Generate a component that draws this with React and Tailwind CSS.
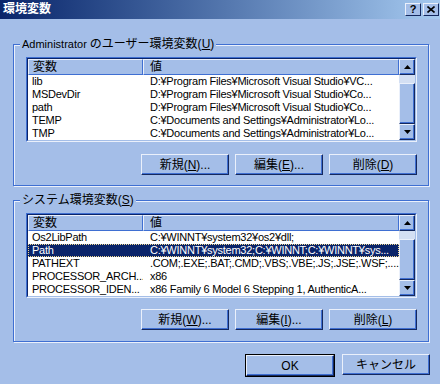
import React from 'react';

const FACE = 'bg-[#a4bee8]';

const userVars = [
  ['lib', 'D:¥Program Files¥Microsoft Visual Studio¥VC...'],
  ['MSDevDir', 'D:¥Program Files¥Microsoft Visual Studio¥Co...'],
  ['path', 'D:¥Program Files¥Microsoft Visual Studio¥Co...'],
  ['TEMP', 'C:¥Documents and Settings¥Administrator¥Lo...'],
  ['TMP', 'C:¥Documents and Settings¥Administrator¥Lo...'],
];

const sysVars = [
  ['Os2LibPath', 'C:¥WINNT¥system32¥os2¥dll;'],
  ['Path', 'C:¥WINNT¥system32;C:¥WINNT;C:¥WINNT¥sys...'],
  ['PATHEXT', '.COM;.EXE;.BAT;.CMD;.VBS;.VBE;.JS;.JSE;.WSF;....'],
  ['PROCESSOR_ARCH...', 'x86'],
  ['PROCESSOR_IDEN...', 'x86 Family 6 Model 6 Stepping 1, AuthenticA...'],
];

const Btn = ({ children, className = '' }) => (
  <div
    className={`h-[21px] w-[88px] ${FACE} flex items-center justify-center text-[12px] text-black border border-t-[#eaf0fb] border-l-[#eaf0fb] border-r-[#14285e] border-b-[#14285e] shadow-[inset_-1px_-1px_0_#3f6fd2] ${className}`}
  >
    {children}
  </div>
);

const Arrow = ({ down }) => (
  <div className={`h-[16px] w-[16px] ${FACE} flex items-center justify-center border border-t-[#eaf0fb] border-l-[#eaf0fb] border-r-[#14285e] border-b-[#14285e] shadow-[inset_-1px_-1px_0_#3f6fd2]`}>
    <svg width="7" height="4" viewBox="0 0 7 4">
      {down ? <path d="M0 0h7L3.5 4z" fill="#000" /> : <path d="M0 4h7L3.5 0z" fill="#000" />}
    </svg>
  </div>
);

const ListBox = ({ rows, selected }) => (
  <div className="h-[85px] flex border border-t-[#3f6fd2] border-l-[#3f6fd2] border-r-[#eaf0fb] border-b-[#eaf0fb]">
    <div className="flex flex-1 min-w-0 bg-white border border-t-[#0a246a] border-l-[#0a246a] border-r-[#a4bee8] border-b-[#a4bee8]">
      <div className="flex flex-1 min-w-0 flex-col">
        <div className="flex h-[16px] text-[12px] leading-[14px] text-black">
          <div className={`w-[115px] ${FACE} pl-[4px] border border-t-[#eaf0fb] border-l-[#eaf0fb] border-r-[#3f6fd2] border-b-[#3f6fd2]`}>変数</div>
          <div className={`flex-1 ${FACE} pl-[6px] border border-t-[#eaf0fb] border-l-[#eaf0fb] border-r-[#3f6fd2] border-b-[#3f6fd2]`}>値</div>
        </div>
        {rows.map(([name, value], i) => (
          <div
            key={name}
            className={`flex h-[13px] text-[11px] leading-[13px] tracking-[-0.25px] whitespace-nowrap ${
              i === selected ? 'bg-[#0a246a] text-white outline outline-1 outline-dotted outline-[#f0d890] -outline-offset-1' : 'text-black'
            }`}
          >
            <div className="w-[115px] pl-[4px] overflow-hidden">{name}</div>
            <div className="flex-1 min-w-0 pl-[7px] overflow-hidden">{value}</div>
          </div>
        ))}
      </div>
      <div className="w-[16px] flex flex-col">
        <Arrow />
        <div className="flex-1 flex flex-col pt-[8px] bg-[#d3dff3]">
          <div className={`flex-1 ${FACE} border border-t-[#eaf0fb] border-l-[#eaf0fb] border-r-[#14285e] border-b-[#14285e] shadow-[inset_-1px_-1px_0_#3f6fd2]`} />
        </div>
        <Arrow down />
      </div>
    </div>
  </div>
);

const Group = ({ label, children, className = '', inner = '' }) => (
  <div className={`border border-[#3f6fd2] shadow-[inset_1px_1px_0_#eaf0fb,1px_1px_0_#eaf0fb] ${className}`}>
    <div className={`-mt-[8px] ml-[6px] w-fit px-[2px] h-[14px] leading-[14px] text-[12px] text-black whitespace-nowrap ${FACE}`}>
      {label}
    </div>
    <div className={inner}>{children}</div>
  </div>
);

export default function App() {
  return (
    <div className={`w-[440px] h-[384px] ${FACE} font-['Liberation_Sans','Noto_Sans_CJK_JP',sans-serif] overflow-hidden`}>
      {/* title bar */}
      <div className="h-[19px] flex items-start bg-linear-to-r from-[#0a246a] to-[#a6caf0]">
        <span className="pl-[3px] pt-[2px] text-[12px] leading-[14px] font-bold text-white">環境変数</span>
        <div className="ml-auto flex gap-[2px] pt-[3px] pr-[1px]">
          <div className={`w-[16px] h-[13px] ${FACE} flex items-center justify-center text-[11px] leading-none font-bold text-black border border-t-[#eaf0fb] border-l-[#eaf0fb] border-r-[#14285e] border-b-[#14285e]`}>?</div>
          <div className={`w-[16px] h-[13px] ${FACE} flex items-center justify-center border border-t-[#eaf0fb] border-l-[#eaf0fb] border-r-[#14285e] border-b-[#14285e]`}>
            <svg width="8" height="7" viewBox="0 0 8 7">
              <path d="M0.5 0.5L7.5 6.5M7.5 0.5L0.5 6.5" stroke="#000" strokeWidth="1.6" />
            </svg>
          </div>
        </div>
      </div>

      <div className="pl-[13px] pr-[11px] pt-[25px]">
        <Group
          label={<><span className="text-[11px]">Administrator </span>のユーザー環境変数(<span className="underline">U</span>)</>}
          inner="pr-[11px] pl-[12px] pb-[10px]"
        >
          <div className="mt-[6px]">
            <ListBox rows={userVars} />
          </div>
          <div className="mt-[12px] flex justify-end gap-[6px]">
            <Btn>新規(<span className="underline">N</span>)...</Btn>
            <Btn>編集(<span className="underline">E</span>)...</Btn>
            <Btn>削除(<span className="underline">D</span>)</Btn>
          </div>
        </Group>

        <Group label={<>システム環境変数(<span className="underline">S</span>)</>} className="mt-[14px]" inner="pr-[11px] pl-[12px] pb-[11px]">
          <div className="mt-[6px]">
            <ListBox rows={sysVars} selected={1} />
          </div>
          <div className="mt-[11px] flex justify-end gap-[6px]">
            <Btn>新規(<span className="underline">W</span>)...</Btn>
            <Btn>編集(<span className="underline">I</span>)...</Btn>
            <Btn>削除(<span className="underline">L</span>)</Btn>
          </div>
        </Group>

        <div className="mt-[12px] flex justify-end gap-[7px] -mr-[1px]">
          <div className="border border-black">
            <Btn className="w-[86px] h-[19px]">OK</Btn>
          </div>
          <Btn className="w-[87px]">キャンセル</Btn>
        </div>
      </div>
    </div>
  );
}
